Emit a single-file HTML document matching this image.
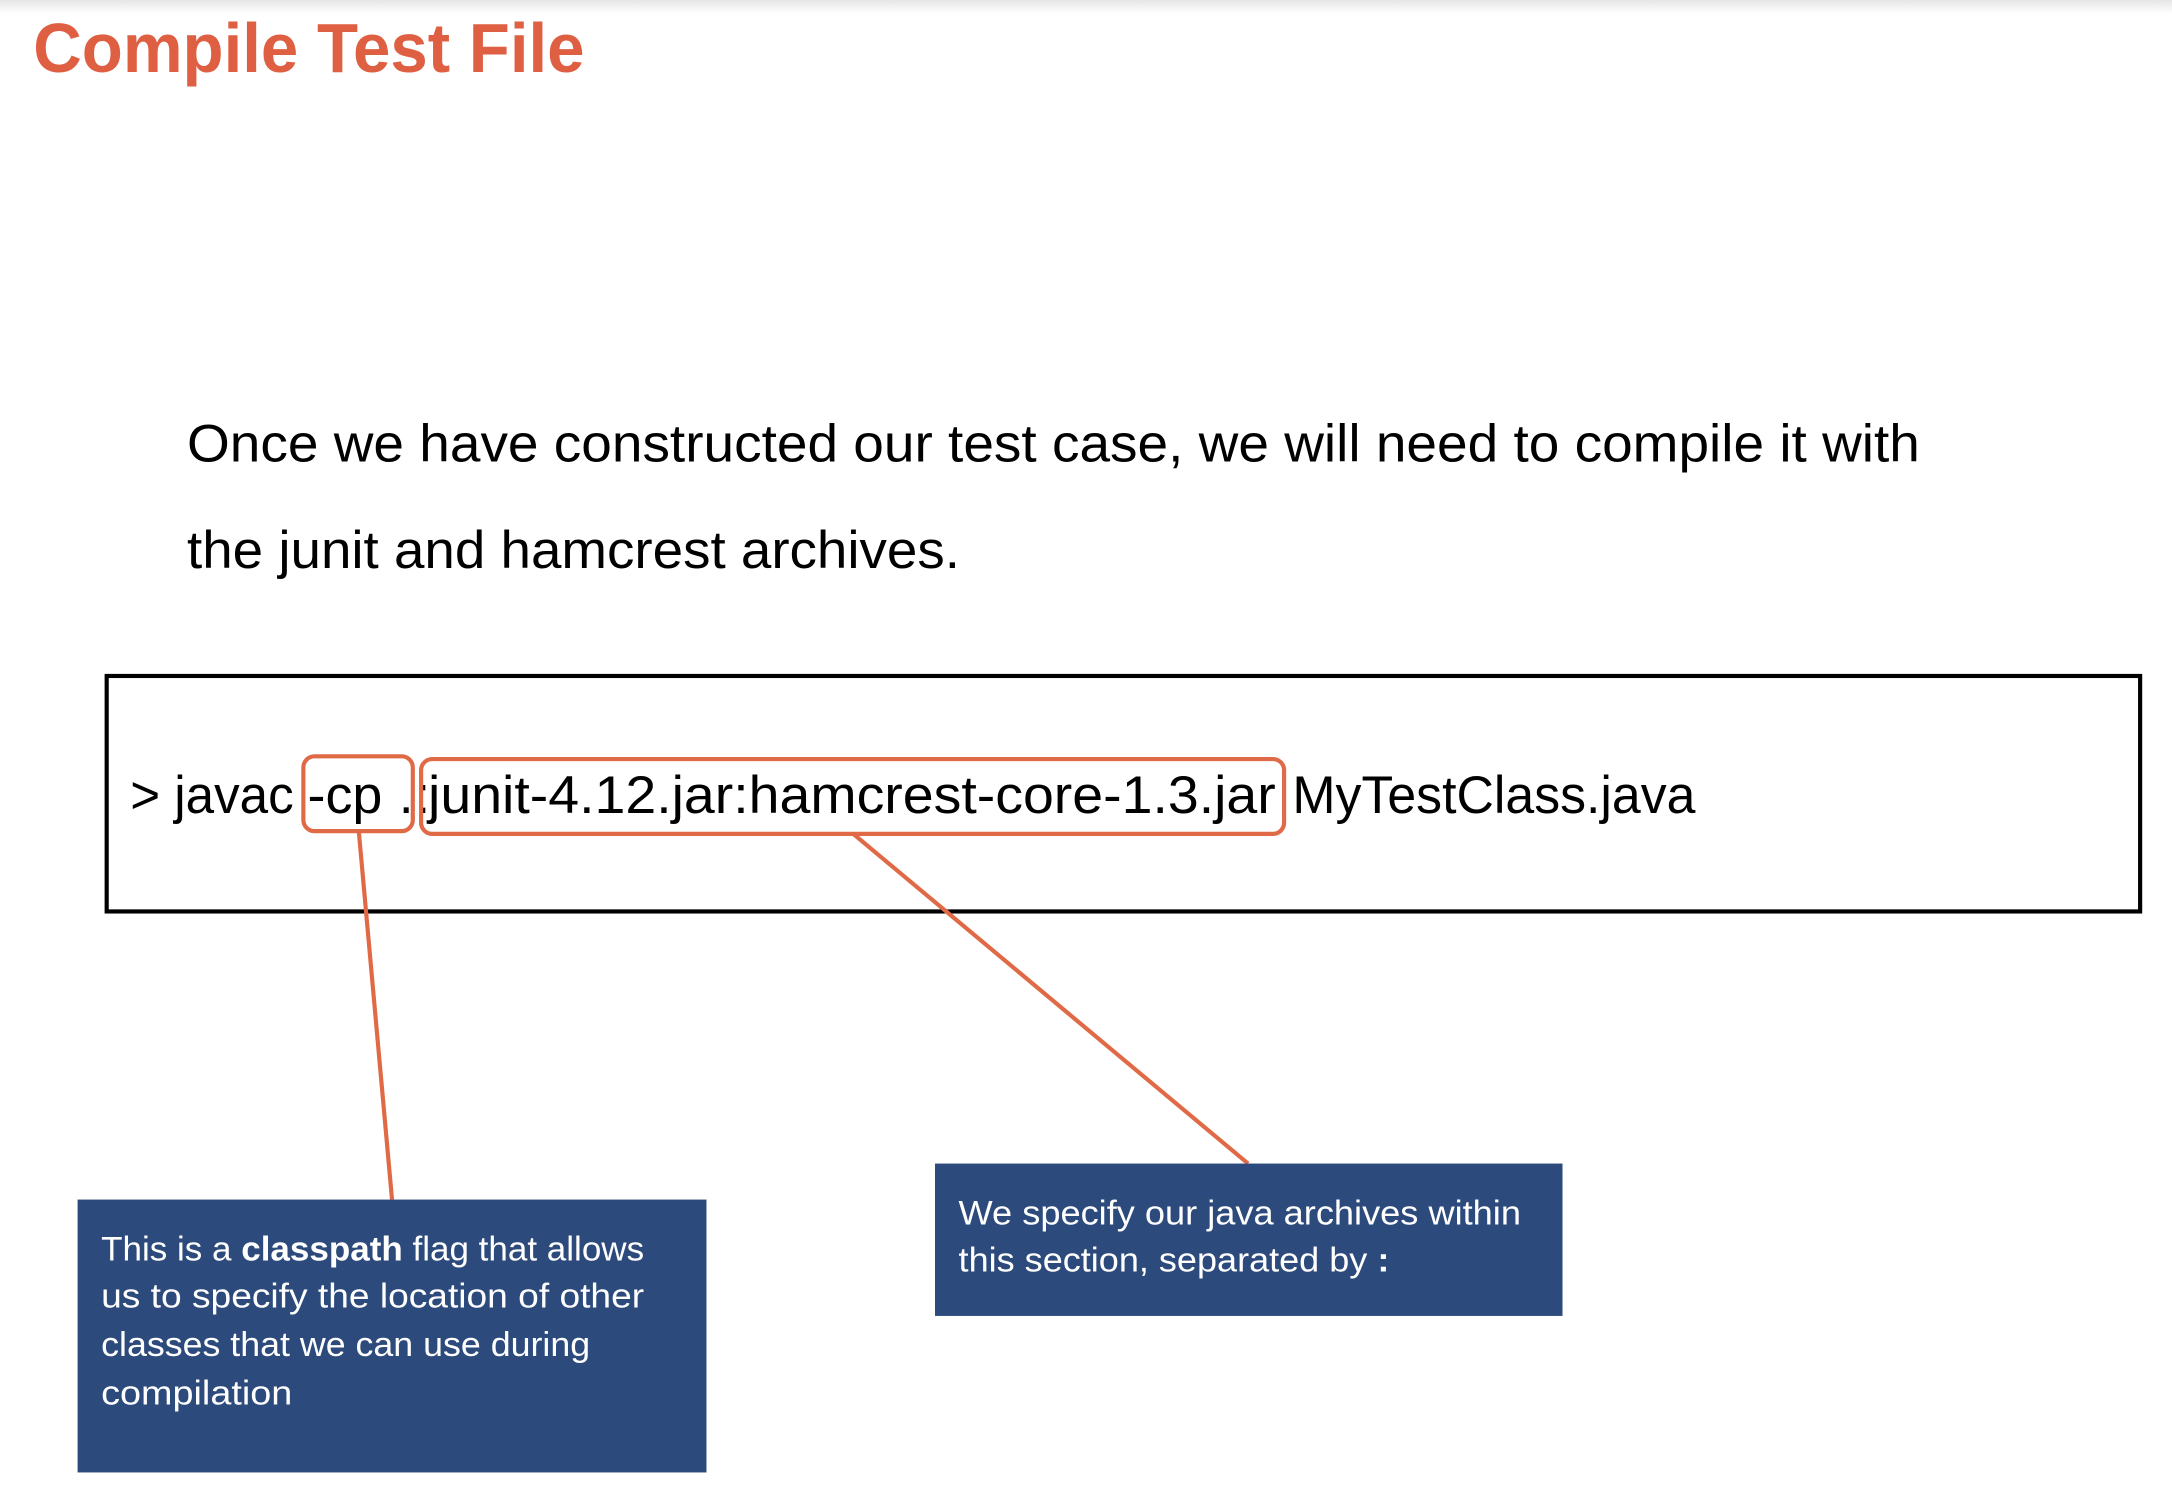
<!DOCTYPE html>
<html><head><meta charset="utf-8"><style>
html,body{margin:0;padding:0;background:#fff;width:2172px;height:1496px;overflow:hidden}
svg{display:block}
text{font-family:"Liberation Sans",sans-serif}
</style></head><body>
<svg width="2172" height="1496" viewBox="0 0 1568 1080" xmlns="http://www.w3.org/2000/svg">
<defs><linearGradient id="g" x1="0" y1="0" x2="0" y2="1"><stop offset="0" stop-color="#e6e6e6"/><stop offset="1" stop-color="#fff"/></linearGradient></defs>
<rect x="0" y="0" width="1568" height="10" fill="url(#g)"/>
<text x="24" y="52" font-size="50" font-weight="bold" fill="#DF5F42" textLength="398" lengthAdjust="spacingAndGlyphs">Compile Test File</text>
<text x="135" y="333" font-size="38" fill="#000" textLength="1251" lengthAdjust="spacingAndGlyphs">Once we have constructed our test case, we will need to compile it with</text>
<text x="135" y="410" font-size="38" fill="#000" textLength="558" lengthAdjust="spacingAndGlyphs">the junit and hamcrest archives.</text>
<rect x="77" y="488" width="1468" height="170" fill="none" stroke="#000" stroke-width="3"/>
<g font-size="38" fill="#000">
<text x="94" y="587" textLength="118" lengthAdjust="spacingAndGlyphs">&gt; javac</text>
<text x="222" y="587" textLength="54" lengthAdjust="spacingAndGlyphs">-cp</text>
<text x="288" y="587">.</text>
<text x="300" y="587">:</text>
<text x="309" y="587" textLength="612" lengthAdjust="spacingAndGlyphs">junit-4.12.jar:hamcrest-core-1.3.jar</text>
<text x="933" y="587" textLength="291" lengthAdjust="spacingAndGlyphs">MyTestClass.java</text>
</g>
<rect x="219" y="546" width="79" height="54" rx="8" fill="none" stroke="#E06A45" stroke-width="3"/>
<rect x="304" y="548" width="623" height="54" rx="8" fill="none" stroke="#E06A45" stroke-width="3"/>
<line x1="259" y1="600" x2="283" y2="866" stroke="#E06A45" stroke-width="3"/>
<line x1="616" y1="602" x2="901" y2="840" stroke="#E06A45" stroke-width="3"/>
<rect x="56" y="866" width="454" height="197" fill="#2C4A7B"/>
<rect x="675" y="840" width="453" height="110" fill="#2C4A7B"/>
<g fill="#fff" font-size="25">
<text x="73" y="910" textLength="392" lengthAdjust="spacingAndGlyphs">This is a <tspan font-weight="bold">classpath</tspan> flag that allows</text>
<text x="73" y="944" textLength="392" lengthAdjust="spacingAndGlyphs">us to specify the location of other</text>
<text x="73" y="979" textLength="353" lengthAdjust="spacingAndGlyphs">classes that we can use during</text>
<text x="73" y="1014" textLength="138" lengthAdjust="spacingAndGlyphs">compilation</text>
<text x="692" y="884" textLength="406" lengthAdjust="spacingAndGlyphs">We specify our java archives within</text>
<text x="692" y="918" textLength="311" lengthAdjust="spacingAndGlyphs">this section, separated by <tspan font-weight="bold">:</tspan></text>
</g>
</svg>
</body></html>
